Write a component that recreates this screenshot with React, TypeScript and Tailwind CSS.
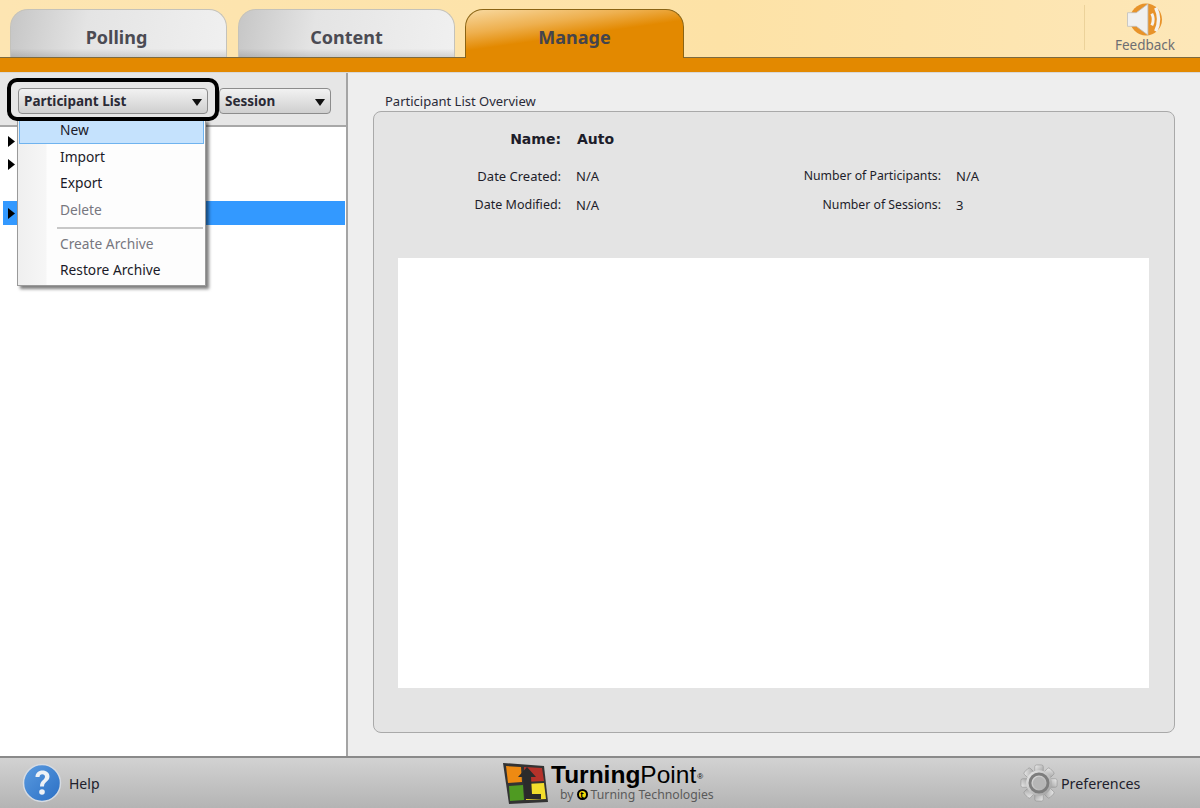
const uiFont = "[font-family:'Noto_Sans','Open_Sans',sans-serif]"

function Caret({ className }: { className: string }) {
  return (
    <svg width="10" height="7" viewBox="0 0 10 7" className={className}>
      <path d="M0 0h10L5 7z" fill="#111" />
    </svg>
  )
}

function TreeArrow() {
  return (
    <svg width="7" height="11" viewBox="0 0 7 11">
      <path d="M0 0l7 5.5L0 11z" fill="#000" />
    </svg>
  )
}

function Tab({ label, width, active, nudge }: { label: string; width: string; active?: boolean; nudge?: string }) {
  if (active) {
    return (
      <div
        className={`${width} relative -mb-px flex h-[49px] items-center justify-center rounded-t-[18px] border border-b-0 border-[#8a6414] bg-[linear-gradient(172deg,#f8d9a0_0%,#eeb04f_30%,#e38900_52%,#e38900_100%)] pt-[6px] text-[18px] font-bold text-[#44444c]`}
      >
        {label}
      </div>
    )
  }
  return (
    <div
      className={`${width} ${nudge ?? ''} flex h-[48px] items-center justify-center rounded-t-[18px] border border-b-0 border-[#c4c2ba] bg-[linear-gradient(transparent_82%,rgba(0,0,0,0.12)),linear-gradient(100deg,#c6c6c6_0%,#e4e4e4_35%,#f0f0f0_100%)] pt-[7px] text-[18px] font-bold text-[#4b4b53]`}
    >
      {label}
    </div>
  )
}

function SelectButton({ label, width }: { label: string; width: string }) {
  return (
    <div
      className={`${width} flex h-[26px] items-center justify-between rounded-[4px] border border-[#8c8c8c] bg-[linear-gradient(#f2f2f2,#cfcfcf)] pl-[5px] pr-[5px] pt-[1px] text-[13.5px] font-bold text-[#2a2a35]`}
    >
      <span>{label}</span>
      <Caret className="mt-[1px]" />
    </div>
  )
}

function MenuItem({ label, disabled, highlighted }: { label: string; disabled?: boolean; highlighted?: boolean }) {
  if (highlighted) {
    return (
      <div className="flex h-[24px] items-center border border-[#6fb3ef] bg-[#c5e2fd] pb-[3px] pl-[40px] text-[13.75px] text-[#1a1a28]">
        {label}
      </div>
    )
  }
  return (
    <div
      className={`flex h-[26.5px] items-center pl-[42px] text-[13.75px] ${disabled ? 'text-[#77777f]' : 'text-[#1a1a28]'}`}
    >
      {label}
    </div>
  )
}

function Menu() {
  return (
    <div className="absolute left-[17px] top-[119px] z-10 w-[189px] border border-[#9a9a9a] bg-[linear-gradient(90deg,#efefef_0,#f6f6f6_28px,#fdfdfd_29px)] pb-[1px] shadow-[3px_3px_3px_rgba(0,0,0,0.5)]">
      <div className="pl-[1px] pr-[1px]">
        <MenuItem label="New" highlighted />
      </div>
      <MenuItem label="Import" />
      <MenuItem label="Export" />
      <MenuItem label="Delete" disabled />
      <div className="my-[3px] ml-[39px] mr-[2px] h-[2px] bg-[#c8c8c8]" />
      <MenuItem label="Create Archive" disabled />
      <div className="-mt-[1px]">
        <MenuItem label="Restore Archive" />
      </div>
    </div>
  )
}

function Sidebar() {
  return (
    <aside className="flex w-[348px] shrink-0 flex-col border-r-2 border-[#a4a4a4]">
      <div className="flex h-[54px] shrink-0 items-start gap-[11px] border-b-2 border-[#a8a8a8] bg-[#e6e6e6] pl-[18px] pt-[15px]">
        <SelectButton label="Participant List" width="w-[190px]" />
        <SelectButton label="Session" width="w-[112px]" />
      </div>
      <div className="flex flex-1 flex-col bg-white pl-[3px] pr-[1px] pt-[8px]">
        <div className="flex h-[13px] items-center pl-[5px]">
          <TreeArrow />
        </div>
        <div className="mt-[10px] flex h-[13px] items-center pl-[5px]">
          <TreeArrow />
        </div>
        <div className="mt-[30px] flex h-[24px] items-center bg-[#3399ff] pl-[5px]">
          <TreeArrow />
        </div>
      </div>
    </aside>
  )
}

function Overview() {
  return (
    <main className="flex flex-1 flex-col bg-[#eeeeee] pb-[23px] pl-[25px] pr-[25px] pt-[19px]">
      <div className="h-[19px] pl-[12px] text-[13px] leading-[18px] text-[#2a2a38]">Participant List Overview</div>
      <section className="flex flex-1 flex-col rounded-[8px] border border-[#a9a9a9] bg-[#e4e4e4] pb-[44px] pl-[24px] pr-[25px]">
        <div className="grid h-[146px] grid-cols-[163px_217px_163px_auto] content-start justify-start text-[13px] leading-[18px] text-[#1d1d2a]">
          <div className="mt-[18px] text-right text-[14px] font-bold [font-family:'DejaVu_Sans',sans-serif]">
            Name:
          </div>
          <div className="col-span-3 ml-[16px] mt-[18px] text-[14px] font-bold [font-family:'DejaVu_Sans',sans-serif]">
            Auto
          </div>
          <div className="mt-[19px] text-right">Date Created:</div>
          <div className="ml-[15px] mt-[19px]">N/A</div>
          <div className="mt-[19px] text-right text-[12.25px]">Number of Participants:</div>
          <div className="ml-[15px] mt-[19px]">N/A</div>
          <div className="mt-[11px] text-right text-[12.5px]">Date Modified:</div>
          <div className="ml-[15px] mt-[11px]">N/A</div>
          <div className="mt-[11px] text-right text-[12.25px]">Number of Sessions:</div>
          <div className="ml-[15px] mt-[11px]">3</div>
        </div>
        <div className="flex-1 bg-white" />
      </section>
    </main>
  )
}

function Speaker() {
  return (
    <svg width="38" height="35" viewBox="0 0 38 35">
      <circle cx="20" cy="17" r="16.500" fill="#e8932a" />
      <path d="M1 10h9L22 1v32L10 24H1z" fill="#f0f0f0" stroke="#bdbdbd" strokeWidth="0.8" />
      <path d="M26 11q3 6 0 12" fill="none" stroke="#f5f2ec" strokeWidth="3" />
      <path d="M30 5q6 12 0 24" fill="none" stroke="#f5f2ec" strokeWidth="3.500" />
    </svg>
  )
}

function HelpIcon() {
  return (
    <svg width="40" height="40" viewBox="0 0 40 40">
      <defs>
        <linearGradient id="help" x1="0" y1="0" x2="1" y2="1">
          <stop offset="0" stopColor="#5b9be0" />
          <stop offset="1" stopColor="#2a6fc4" />
        </linearGradient>
      </defs>
      <circle cx="20" cy="20" r="18.5" fill="url(#help)" stroke="#d6dbe2" strokeWidth="1.5" />
      <path
        d="M13.5 14c0-4 3-6.500 7-6.500s7 2.500 7 6c0 5-5.500 5-5.500 10h-4c0-6 5-6.500 5-9.700 0-1.500-1-2.500-2.700-2.500-1.800 0-2.800 1.200-2.800 2.700z"
        fill="#eef2f6"
      />
      <circle cx="20" cy="29" r="2.800" fill="#eef2f6" />
    </svg>
  )
}

function Logo() {
  return (
    <svg width="46" height="42" viewBox="0 0 46 42">
      <path d="M1 1l41 3 4 36-39 2z" fill="#333" />
      <path d="M4 4l15 1 1 15-14 1z" fill="#ee8a12" />
      <path d="M22 5l18 1 2 13-20 1z" fill="#b5322a" />
      <path d="M7 24l14-1 1 15-14 1z" fill="#4f9a22" />
      <path d="M24 22l18-1 2 16-20 1z" fill="#f2dd2c" />
      <path d="M25 5l9 10h-5l1 17h9v5H23l-2-22h-5z" fill="#2b2b2b" />
    </svg>
  )
}

function Gear() {
  const teeth = [0, 45, 90, 135, 180, 225, 270, 315]
  return (
    <svg width="38" height="40" viewBox="0 0 40 40">
      <defs>
        <linearGradient id="gear" x1="0" y1="0" x2="1" y2="1">
          <stop offset="0" stopColor="#ececec" />
          <stop offset="1" stopColor="#9c9c9c" />
        </linearGradient>
      </defs>
      {teeth.map((angle) => (
        <rect
          key={angle}
          x="15.500"
          y="1"
          width="9"
          height="9"
          rx="2"
          fill="url(#gear)"
          stroke="#8f8f8f"
          strokeWidth="0.6"
          transform={`rotate(${angle} 20 20)`}
        />
      ))}
      <circle cx="20" cy="20" r="13.500" fill="url(#gear)" />
      <circle cx="20" cy="20" r="9.500" fill="none" stroke="#7d7d7d" strokeWidth="3" />
      <circle cx="20" cy="20" r="6.500" fill="#b6b6b6" />
    </svg>
  )
}

export default function App() {
  return (
    <div className={`${uiFont} relative flex h-[808px] w-[1200px] flex-col overflow-hidden bg-white`}>
      <header className="flex h-[58px] shrink-0 items-end border-b border-[#7d6a3e] bg-[linear-gradient(90deg,#fde5b2,#fde2a6_60%,#fde7b8)] pl-[10px]">
        <div className="flex items-end">
          <Tab label="Polling" width="w-[217px]" nudge="pr-[4px]" />
          <div className="ml-[11px]">
            <Tab label="Content" width="w-[217px]" />
          </div>
          <div className="ml-[10px]">
            <Tab label="Manage" width="w-[219px]" active />
          </div>
        </div>
        <div className="ml-auto flex h-[52px] self-start pt-[3px]">
          <div className="mt-[2px] h-[45px] w-px bg-[#ecd29a]" />
          <div className="flex w-[115px] flex-col items-center pl-[5px] text-[13.5px] leading-[14px] text-[#6e6e72]">
            <Speaker />
            <span className="mt-[1px]">Feedback</span>
          </div>
        </div>
      </header>
      <div className="h-[15px] shrink-0 border-b border-[#d8d8d8] bg-[#e38900]" />

      <div className="flex min-h-0 flex-1">
        <Sidebar />
        <Overview />
      </div>

      <footer className="flex h-[52px] shrink-0 items-center justify-start border-t-2 border-[#8a8a8a] bg-[linear-gradient(#d2d2d2,#b4b4b4)] pl-[22px] text-[14px] text-[#20202c]">
        <div className="flex w-[480px] items-center gap-[7px]">
          <HelpIcon />
          <span>Help</span>
        </div>
        <div className="flex w-[518px] items-center gap-[3px]">
          <Logo />
          <div className="-mt-[3px] flex flex-col">
            <div className="h-[26px] text-[24.5px] leading-[25px] text-black [font-family:'Liberation_Sans',sans-serif]">
              <span className="font-bold">Turning</span>
              <span>Point</span>
              <sup className="ml-[1px] text-[8px] leading-none">®</sup>
            </div>
            <div className="flex items-center pl-[9px] text-[12.25px] leading-[14px] text-[#5a5a5a]">
              by
              <span className="mx-[3px] flex h-[11px] w-[11px] items-center justify-center rounded-full border-2 border-black bg-[#f5d90a] text-[8px] font-bold leading-none text-black">
                t
              </span>
              Turning Technologies
            </div>
          </div>
        </div>
        <div className="flex items-center gap-[3px]">
          <Gear />
          <span className="pt-[1px] text-[14.25px]">Preferences</span>
        </div>
      </footer>

      <Menu />
      <div className="absolute left-[7px] top-[78px] z-20 h-[43px] w-[212px] rounded-[10px] border-[4px] border-black" />
    </div>
  )
}
